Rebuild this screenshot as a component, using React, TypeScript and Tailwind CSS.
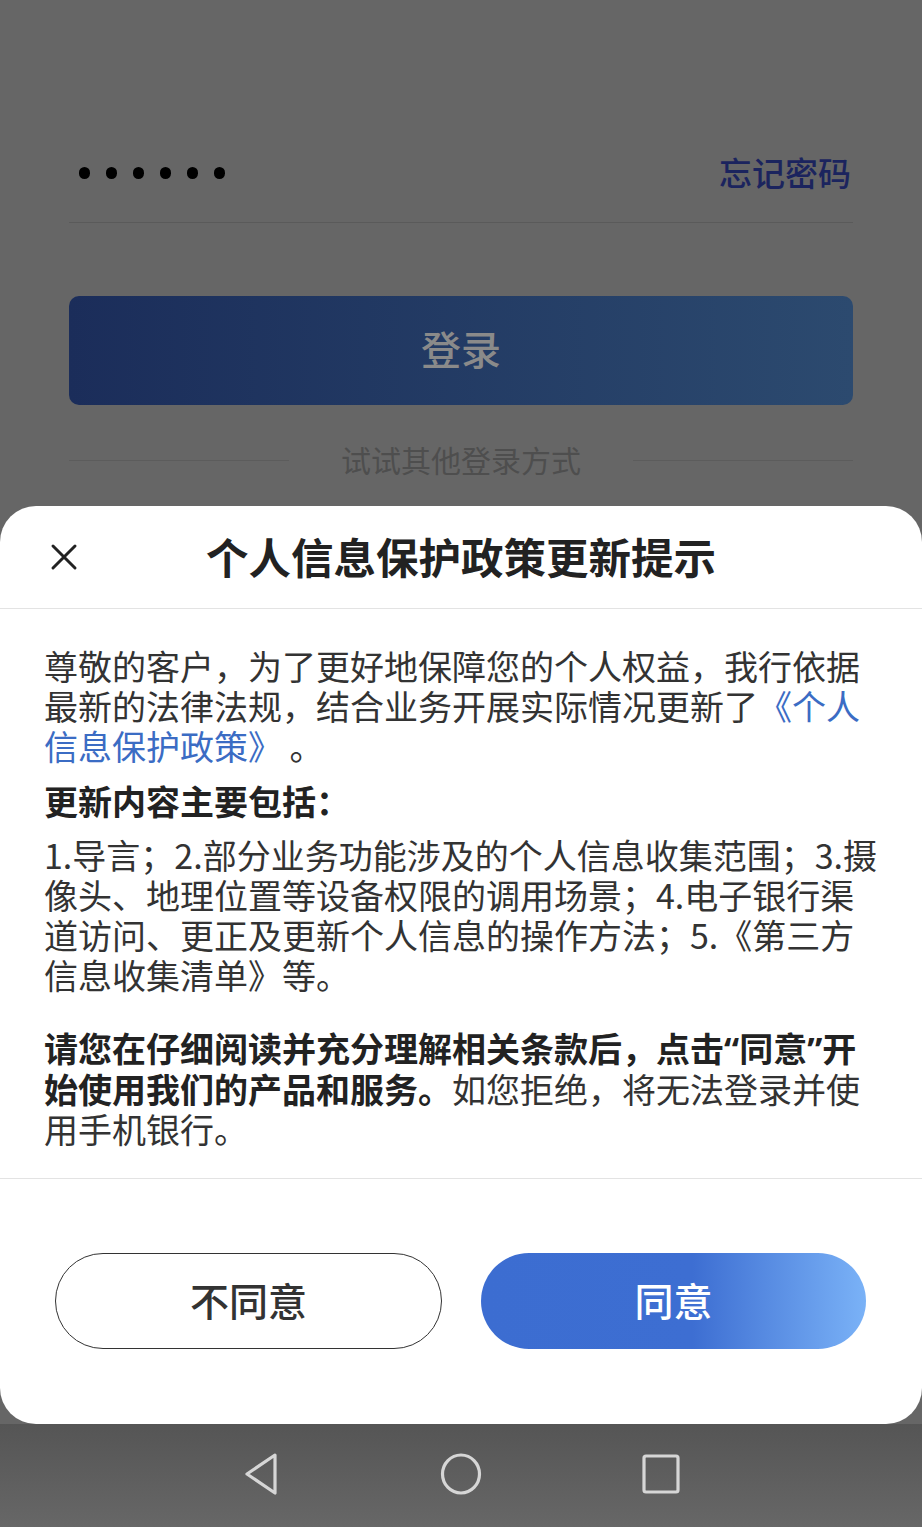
import React from "react";

function NavBack() {
  return (
    <svg width="40" height="44" viewBox="0 0 40 44" fill="none">
      <path d="M34 3 L6 22 L34 41 Z" stroke="#d6d6d6" strokeWidth="3.2" strokeLinejoin="round" />
    </svg>
  );
}

function NavHome() {
  return (
    <svg width="44" height="44" viewBox="0 0 44 44" fill="none">
      <ellipse cx="22" cy="22" rx="18.5" ry="19" stroke="#d6d6d6" strokeWidth="3.2" />
    </svg>
  );
}

function NavRecent() {
  return (
    <svg width="40" height="42" viewBox="0 0 40 42" fill="none">
      <rect x="3" y="3" width="34" height="36" rx="2" stroke="#d6d6d6" strokeWidth="3.2" />
    </svg>
  );
}

function CloseIcon() {
  return (
    <svg width="28" height="28" viewBox="0 0 28 28" fill="none">
      <path d="M3 3 L25 25 M25 3 L3 25" stroke="#222" strokeWidth="3" strokeLinecap="round" />
    </svg>
  );
}

export default function App() {
  return (
    <div className="relative w-[922px] h-[1527px] overflow-hidden bg-[#666666] font-['Noto_Sans_CJK_SC','Noto_Sans',sans-serif]">
      {/* Login page (dimmed behind overlay) */}
      <div className="flex flex-col px-[69px] pt-[143px]">
        <div className="flex h-[60px] items-center justify-between pl-[10px] pr-[2px]">
          <div className="flex items-center gap-[16px]">
            <div className="h-[12px] w-[11px] rounded-full bg-black" />
            <div className="h-[12px] w-[11px] rounded-full bg-black" />
            <div className="h-[12px] w-[11px] rounded-full bg-black" />
            <div className="h-[12px] w-[11px] rounded-full bg-black" />
            <div className="h-[12px] w-[11px] rounded-full bg-black" />
            <div className="h-[12px] w-[11px] rounded-full bg-black" />
          </div>
          <span className="pb-[3px] text-[33px] font-medium leading-[40px] text-[#1b245e]">忘记密码</span>
        </div>
        <div className="mt-[19px] border-t border-[#5a5a5a]" />
        <div className="mt-[73px] flex h-[109px] items-center justify-center rounded-[10px] bg-gradient-to-r from-[#1b2d5a] to-[#2c4a6f]">
          <span className="pb-[5px] text-[40px] font-medium leading-[46px] text-[#8a8a8a]">登录</span>
        </div>
        <div className="mt-[35px] flex h-[40px] items-center gap-[10px]">
          <div className="flex-1 border-t border-[#5c5c5c]" />
          <span className="px-[42px] pb-[3px] text-[30px] leading-[36px] text-[#4e4e4e]">试试其他登录方式</span>
          <div className="flex-1 border-t border-[#5c5c5c]" />
        </div>
      </div>

      {/* Overlay */}
      <div className="absolute inset-0 flex flex-col justify-end">
        <div className="flex flex-col rounded-[36px] bg-white">
          <div className="relative flex h-[103px] items-center justify-center border-b border-[#e3e3e3]">
            <div className="absolute left-[50px] top-[37px]">
              <CloseIcon />
            </div>
            <span className="pb-[2px] text-[42.5px] font-bold leading-[50px] text-[#222]">个人信息保护政策更新提示</span>
          </div>
          <div className="flex flex-col border-b border-[#e3e3e3] pl-[44px] pr-[30px] pt-[37px] pb-[29px] text-[34px] leading-[40px] text-[#333]">
            <p>
              尊敬的客户，为了更好地保障您的个人权益，我行依据
              <br />
              最新的法律法规，结合业务开展实际情况更新了<span className="text-[#3b6cc4]">《个人</span>
              <br />
              <span className="text-[#3b6cc4]">信息保护政策》</span> 。
            </p>
            <p className="mt-[15px] font-bold text-[#222]">更新内容主要包括：</p>
            <p className="mt-[14px] whitespace-nowrap">
              1.导言；2.部分业务功能涉及的个人信息收集范围；3.摄
              <br />
              像头、地理位置等设备权限的调用场景；4.电子银行渠
              <br />
              道访问、更正及更新个人信息的操作方法；5.《第三方
              <br />
              信息收集清单》等。
            </p>
            <p className="mt-[33px] whitespace-nowrap">
              <span className="font-bold text-[#222]">
                请您在仔细阅读并充分理解相关条款后，点击
                <span className="font-['Noto_Sans',sans-serif]">“</span>同意
                <span className="font-['Noto_Sans',sans-serif]">”</span>开
              </span>
              <br />
              <span className="font-bold text-[#222]">始使用我们的产品和服务。</span>如您拒绝，将无法登录并使
              <br />
              用手机银行。
            </p>
          </div>
          <div className="flex gap-[39px] pl-[55px] pr-[56px] pt-[74px] pb-[75px]">
            <div className="flex h-[96px] flex-1 items-center justify-center rounded-full border-[1.5px] border-[#333]">
              <span className="pb-[5px] text-[39px] font-medium leading-[46px] text-[#333]">不同意</span>
            </div>
            <div className="flex h-[96px] flex-1 items-center justify-center rounded-full bg-[linear-gradient(90deg,#3c6dd1_0%,#3d6ed2_55%,#7ab2f7_100%)]">
              <span className="pb-[5px] text-[39px] font-medium leading-[46px] text-white">同意</span>
            </div>
          </div>
        </div>
        <div className="flex h-[103px] items-center justify-center bg-gradient-to-b from-[#555555] to-[#676767]">
          <div className="flex w-[440px] items-center justify-between pb-[4px]">
            <NavBack />
            <NavHome />
            <NavRecent />
          </div>
        </div>
      </div>
    </div>
  );
}
